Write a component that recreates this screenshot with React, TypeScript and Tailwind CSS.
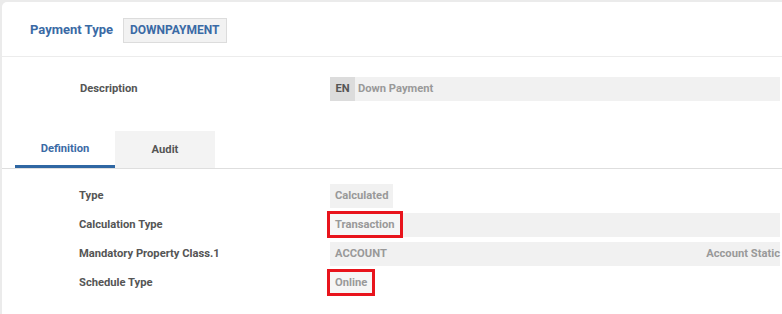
import React from "react";

type Row = {
  label: string;
  value: string;
  full?: boolean;
  marked?: boolean;
  extra?: string;
};

const rows: Row[] = [
  { label: "Type", value: "Calculated" },
  { label: "Calculation Type", value: "Transaction", full: true, marked: true },
  { label: "Mandatory Property Class.1", value: "ACCOUNT", full: true, extra: "Account Static" },
  { label: "Schedule Type", value: "Online", marked: true },
];

const FieldRow = ({ label, value, full, marked, extra }: Row) => (
  <div className="flex items-center h-[24px]">
    <div className="w-[251px] shrink-0 text-[11.2px] font-bold text-[#555]">{label}</div>
    <div className={`relative h-[24px] flex items-center ${full ? "flex-1 bg-[#f1f1f1]" : ""}`}>
      <span className={`relative h-full flex items-center px-[5px] text-[11.2px] font-bold text-[#999] ${marked ? "bg-[#f6f6f6]" : "bg-[#f1f1f1]"}`}>
        {value}
        {marked && (
          <span className="absolute -left-[3px] -right-[3px] -top-[2px] -bottom-[1px] border-[3px] border-[#e8141c]" />
        )}
      </span>
      {extra && (
        <span className="ml-auto text-[11.2px] font-bold text-[#999] whitespace-nowrap">{extra}</span>
      )}
    </div>
  </div>
);

export default function App() {
  return (
    <div
      className="w-[782px] h-[314px] bg-[#ebebeb] pt-[2px] pl-[2px] overflow-hidden"
      style={{ fontFamily: "Roboto, 'Liberation Sans', sans-serif" }}
    >
      <div className="bg-white h-full rounded-tl-[5px]">
        <div className="h-[55px] flex items-center pl-[28px] pt-[2px] border-b border-[#ececec]">
          <span className="text-[13px] font-bold text-[#3a6aa5]">Payment Type</span>
          <span className="ml-[10px] h-[25px] flex items-center px-[6px] border border-[#dcdcdc] bg-[#f2f2f2] text-[12px] font-bold text-[#3a6aa5]">
            DOWNPAYMENT
          </span>
        </div>

        <div className="flex items-center h-[24px] mt-[20px] pl-[78px] pr-[2px]">
          <div className="w-[250px] shrink-0 text-[11.2px] font-bold text-[#555]">Description</div>
          <div className="flex-1 h-[24px] flex items-center bg-[#f1f1f1]">
            <span className="h-full w-[25px] flex items-center justify-center bg-[#dcdcdc] text-[11.2px] font-bold text-[#555]">
              EN
            </span>
            <span className="ml-[3px] text-[11.2px] font-bold text-[#999]">Down Payment</span>
          </div>
        </div>

        <div className="mt-[30px] border-b border-[#dedede] flex pl-[13px]">
          <div className="w-[100px] h-[37px] flex items-center justify-center pt-[3px] border-b-[3px] border-[#2f67a3] text-[11.2px] font-bold text-[#3a6aa5]">
            Definition
          </div>
          <div className="w-[100px] h-[37px] flex items-center justify-center pt-[1px] bg-[#f3f3f3] text-[11.2px] font-bold text-[#555]">
            Audit
          </div>
        </div>

        <div className="flex flex-col gap-[5px] mt-[15px] pl-[77px] pr-[2px]">
          {rows.map((r) => (
            <FieldRow key={r.label} {...r} />
          ))}
        </div>
      </div>
    </div>
  );
}
